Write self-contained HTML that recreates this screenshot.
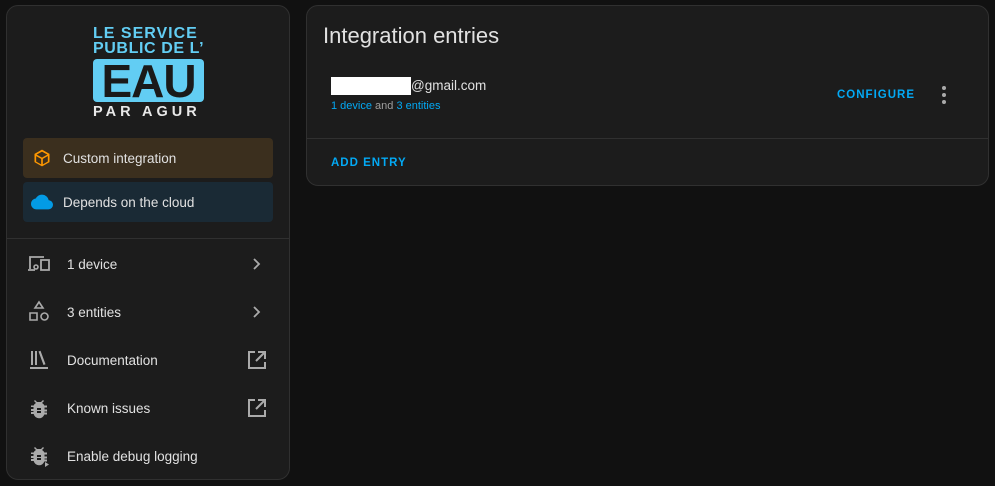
<!DOCTYPE html>
<html><head><style>
*{margin:0;padding:0;box-sizing:border-box}
body{width:995px;height:486px;background:#111111;font-family:"Liberation Sans",sans-serif;position:relative;overflow:hidden;color:#e1e1e1}
.card{position:absolute;background:#1c1c1c;border:1px solid #303030;border-radius:12px}
.abs{position:absolute}
.logo{color:#62cdf3;font-weight:bold;font-size:16px;line-height:14px;letter-spacing:1px;white-space:nowrap}
.chip{position:absolute;left:16px;width:250px;height:40px;border-radius:4px;font-size:13.5px;display:flex;align-items:center;padding-left:40px}
.row{position:absolute;left:0;width:283px;height:48px;display:flex;align-items:center;font-size:13.5px;color:#e1e1e1}
.row .t{position:absolute;left:60px}
.row svg{position:absolute}
.link{color:#03a9f4}
</style></head><body>
<div class="card" style="left:6px;top:5px;width:284px;height:475px">
  <div class="abs logo" style="left:86px;top:21px">LE SERVICE</div>
  <div class="abs logo" style="left:86px;top:36px;letter-spacing:0.6px">PUBLIC DE L’</div>
  <div class="abs" style="left:86px;top:53px;width:111px;height:43px;background:#62cdf3;border-radius:4px;color:#1a1a1a;font-weight:900;font-size:46px;line-height:44px;text-align:center;letter-spacing:-1px">EAU</div>
  <div class="abs" style="left:86px;top:99px;width:118px;color:#e8e8e8;font-weight:bold;font-size:14.5px;line-height:14px;letter-spacing:4px">PAR AGUR</div>
  <div class="chip" style="top:132px;background:#3b2f1e;color:#e1e1e1">
    <svg class="abs" style="left:9px;top:10px" width="20" height="20" viewBox="0 0 24 24"><path fill="#ff9800" d="M12 2L3 7v10l9 5 9-5V7l-9-5zm0 2.3L18.5 8 12 11.6 5.5 8 12 4.3zM5 9.7l6 3.4v6.6l-6-3.4V9.7zm8 10V13l6-3.4v6.6l-6 3.5z"/></svg>Custom integration</div>
  <div class="chip" style="top:176px;background:#1a2a35">
    <svg class="abs" style="left:8px;top:9px" width="22" height="22" viewBox="0 0 24 24"><path fill="#039be5" d="M19.35 10.04A7.49 7.49 0 0 0 12 4C9.11 4 6.6 5.64 5.350 8.04A6 6 0 0 0 0 14a6 6 0 0 0 6 6h13a5 5 0 0 0 5-5c0-2.64-2.050-4.78-4.65-4.96z"/></svg>Depends on the cloud</div>
  <div class="abs" style="left:0;top:232px;width:282px;height:1px;background:#303030"></div>
  <div class="row" style="top:234px"><svg style="left:20px;top:14px" width="24" height="20" viewBox="0 0 24 20"><path fill="none" stroke="#aaa" stroke-width="1.8" d="M3 15V3h14M1 16h7M14 6h8v10h-8z"/><circle cx="9" cy="13" r="2" fill="none" stroke="#aaa" stroke-width="1.6"/></svg><span class="t">1 device</span><svg style="left:243px;top:17px" width="14" height="14" viewBox="0 0 14 14"><path d="M4 2l5 5-5 5" fill="none" stroke="#aaa" stroke-width="1.8"/></svg></div>
  <div class="row" style="top:282px"><svg style="left:21px;top:12px" width="22" height="22" viewBox="0 0 22 22"><path fill="none" stroke="#aaa" stroke-width="1.6" d="M11 2l4 6H7zM2 13h7v7H2z"/><circle cx="16.5" cy="16.5" r="3.5" fill="none" stroke="#aaa" stroke-width="1.6"/></svg><span class="t">3 entities</span><svg style="left:243px;top:17px" width="14" height="14" viewBox="0 0 14 14"><path d="M4 2l5 5-5 5" fill="none" stroke="#aaa" stroke-width="1.8"/></svg></div>
  <div class="row" style="top:330px"><svg style="left:22px;top:13px" width="22" height="22" viewBox="0 0 22 22"><path fill="#aaa" d="M2 2h2v14H2zM6 2h2v14H6zM9.5 2.5l2-.7 5 13.5-2 .7zM1 18h18v2H1z"/></svg><span class="t">Documentation</span><svg style="left:240px;top:14px" width="20" height="20" viewBox="0 0 20 20"><path fill="none" stroke="#aaa" stroke-width="2" d="M8 2H2v16h16v-6M11 2h7v7M18 2L9 11"/></svg></div>
  <div class="row" style="top:378px"><svg style="left:22px;top:13px" width="20" height="22" viewBox="0 0 20 22"><path fill="#aaa" d="M6 3l2 2h4l2-2 1 1-2 2c1 .6 2 1.5 2.3 2.5H18v2h-2.5v2H18v2h-2.5v1H18v2h-2.7A5.5 5.5 0 0 1 4.7 17H2v-2h2.5v-1H2v-2h2.5v-2H2V8.5h2.7C5 7.5 6 6.6 7 6L5 4zm2 8v2h4v-2zm0 3v2h4v-2z"/></svg><span class="t">Known issues</span><svg style="left:240px;top:14px" width="20" height="20" viewBox="0 0 20 20"><path fill="none" stroke="#aaa" stroke-width="2" d="M8 2H2v16h16v-6M11 2h7v7M18 2L9 11"/></svg></div>
  <div class="row" style="top:426px"><svg style="left:22px;top:12px" width="22" height="24" viewBox="0 0 22 24"><path fill="#aaa" d="M6 3l2 2h4l2-2 1 1-2 2c1 .6 2 1.5 2.3 2.5H18v2h-2.5v2H18v2h-2.5v1H18v2h-2.7A5.5 5.5 0 0 1 4.7 17H2v-2h2.5v-1H2v-2h2.5v-2H2V8.5h2.7C5 7.5 6 6.6 7 6L5 4zm2 8v2h4v-2zm0 3v2h4v-2zM16 18l4 2.5-4 2.5z"/></svg><span class="t">Enable debug logging</span></div>
</div>
<div class="card" style="left:306px;top:5px;width:683px;height:181px">
  <div class="abs" style="left:16px;top:17px;font-size:22px;color:#e1e1e1">Integration entries</div>
  <div class="abs" style="left:24px;top:71px;width:80px;height:18px;background:#fff"></div>
  <div class="abs" style="left:104px;top:72px;font-size:13.5px;color:#e1e1e1">@gmail.com</div>
  <div class="abs" style="left:24px;top:94px;font-size:11px;color:#9e9e9e"><span class="link">1 device</span> and <span class="link">3 entities</span></div>
  <div class="abs" style="left:530px;top:83px;font-size:11.5px;font-weight:bold;letter-spacing:1px;color:#03a9f4">CONFIGURE</div>
  <svg class="abs" style="left:634px;top:79px" width="6" height="20" viewBox="0 0 6 20"><circle cx="3" cy="3" r="2" fill="#aaa"/><circle cx="3" cy="10" r="2" fill="#aaa"/><circle cx="3" cy="17" r="2" fill="#aaa"/></svg>
  <div class="abs" style="left:0;top:132px;width:681px;height:1px;background:#303030"></div>
  <div class="abs" style="left:24px;top:151px;font-size:11.5px;font-weight:bold;letter-spacing:1px;color:#03a9f4">ADD ENTRY</div>
</div>
</body></html>
